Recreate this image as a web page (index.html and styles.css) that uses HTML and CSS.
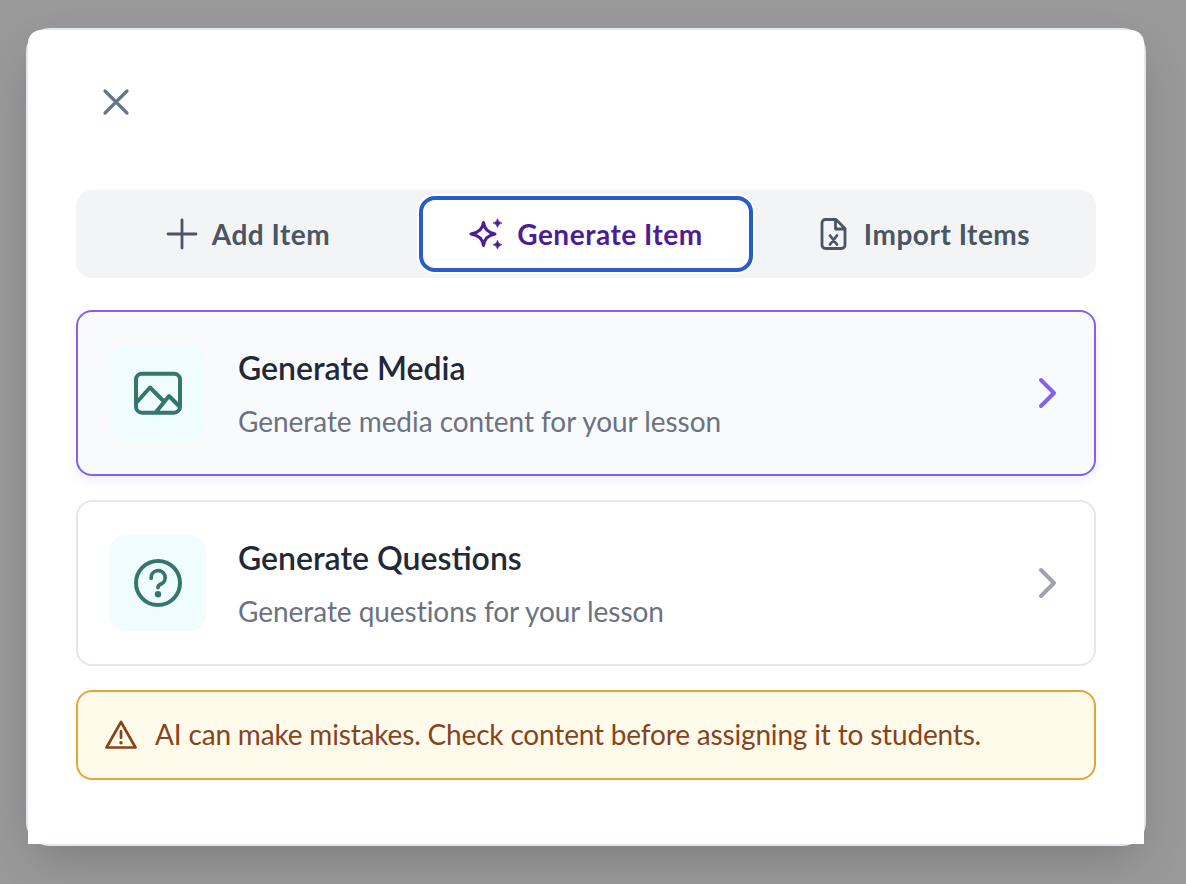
FILE: index.html
```
<!DOCTYPE html>
<html lang="en">
<head>
    <meta charset="UTF-8">
    <meta name="viewport" content="width=device-width, initial-scale=1.0">
    <title>Generate Item</title>
    <link rel="stylesheet" href="styles.css">
</head>
<body>
    <div class="modal">
        <div class="modal-content">
            <button class="close-btn" aria-label="Close">
                <svg width="28" height="28" viewBox="0 0 28 28"><path d="M3 3L25 25M25 3L3 25" stroke-width="3.2"/></svg>
            </button>

            <div class="tabs">
                <button class="tab">
                    <svg width="32" height="32" viewBox="0 0 32 32"><path d="M16 2V30M2 16H30" stroke-width="2.8"/></svg>
                    <span>Add Item</span>
                </button>
                <button class="tab active">
                    <svg width="34" height="32" viewBox="0 0 34 32">
                        <path d="M14.5 4.5Q16 14.5 26 16Q16 17.5 14.5 27.5Q13 17.5 2 16Q13 14.5 14.5 4.5Z" stroke-width="3"/>
                        <path class="fill" d="M28.5 1Q29.2 4.3 33 5Q29.2 5.7 28.5 9.5Q27.8 5.7 24 5Q27.8 4.3 28.5 1ZM28.5 22.5Q29.2 26 33 26.7Q29.2 27.4 28.5 31Q27.8 27.4 24 26.7Q27.8 26 28.5 22.5Z" stroke-width="0.6"/>
                    </svg>
                    <span>Generate Item</span>
                </button>
                <button class="tab">
                    <svg width="32" height="32" viewBox="0 0 32 32">
                        <path d="M18 1.5H7.5A3.5 3.5 0 0 0 4 5V27A3.5 3.5 0 0 0 7.5 30.5H23.5A3.5 3.5 0 0 0 27 27V10.5ZM17.5 2V11H27M12 17.5L19 26.5M19 17.5L12 26.5" stroke-width="2.8"/>
                    </svg>
                    <span>Import Items</span>
                </button>
            </div>

            <div class="option selected">
                <div class="option-icon">
                    <svg width="48" height="48" viewBox="0 0 48 48">
                        <rect x="2" y="4.7" width="44" height="39" rx="6" stroke-width="4"/>
                        <path d="M2.5 33.5L16 18.5L30 32.5M22.5 42.5L35 27L45.5 37.5" stroke-width="4"/>
                    </svg>
                </div>
                <div class="option-text">
                    <h3>Generate Media</h3>
                    <p>Generate media content for your lesson</p>
                </div>
                <svg class="chevron" width="20" height="32" viewBox="0 0 20 32"><path d="M3 3L16 16L3 29" stroke-width="4"/></svg>
            </div>

            <div class="option">
                <div class="option-icon">
                    <svg width="48" height="48" viewBox="0 0 48 48">
                        <circle cx="24" cy="24" r="22" stroke-width="4"/>
                        <path d="M17.2 19.3A7 7 0 1 1 27 25Q24 26.3 24 28.5" stroke-width="3.8"/>
                        <circle class="fill" cx="24" cy="35.3" r="3.2" stroke-width="0"/>
                    </svg>
                </div>
                <div class="option-text">
                    <h3>Generate Questions</h3>
                    <p>Generate questions for your lesson</p>
                </div>
                <svg class="chevron" width="20" height="32" viewBox="0 0 20 32"><path d="M3 3L16 16L3 29" stroke-width="4"/></svg>
            </div>

            <div class="alert">
                <svg width="32" height="32" viewBox="0 0 32 32">
                    <path d="M16 3L30.5 28.5H1.5ZM16 12.3V18.8" stroke-width="2.7"/>
                    <circle class="fill" cx="16" cy="23.7" r="1.7" stroke-width="0"/>
                </svg>
                <span>AI can make mistakes. Check content before assigning it to students.</span>
            </div>
        </div>
    </div>
</body>
</html>
```
FILE: styles.css
```
* {
    box-sizing: border-box;
}
body {
    margin: 0;
    height: 884px;
    padding: 28px 26px;
    background: #999;
    font-family: Lato, sans-serif;
    overflow: hidden;
}
svg {
    display: block;
    flex-shrink: 0;
    fill: none;
    stroke: currentColor;
    stroke-linecap: round;
    stroke-linejoin: round;
}
.fill {
    fill: currentColor;
}
button {
    border: none;
    background: none;
    font-family: inherit;
    cursor: pointer;
}
.modal {
    width: 1120px;
    height: 818px;
    border: 2px solid #e2e8f0;
    border-radius: 24px;
    box-shadow: 0 20px 50px -10px rgba(0, 0, 0, 0.2);
}
.modal-content {
    height: 100%;
    padding: 32px 48px;
    background: #fff;
    border-radius: 13px 13px 0 0;
}
.close-btn {
    display: flex;
    align-items: center;
    justify-content: center;
    width: 80px;
    height: 80px;
    padding: 0;
    color: #64748b;
}
.tabs {
    display: flex;
    gap: 4px;
    height: 88px;
    margin-top: 48px;
    padding: 6px 5px;
    background: #f3f4f6;
    border-radius: 16px;
}
.tab {
    flex: 1;
    display: flex;
    align-items: center;
    justify-content: center;
    gap: 14px;
    padding: 0;
    border: 4px solid transparent;
    border-radius: 16px;
    color: #4b5563;
    font-size: 28px;
    font-weight: 700;
    letter-spacing: 0.52px;
}
.tab.active {
    background: #fff;
    border-color: #265dc8;
    box-shadow: 0 0 0 2px #fff;
    color: #4c1d95;
}
.option {
    display: flex;
    align-items: center;
    height: 166px;
    margin-top: 24px;
    padding: 0 36px 0 32px;
    border: 2px solid #e5e7eb;
    border-radius: 16px;
}
.option.selected {
    margin-top: 32px;
    background: #f9fafc;
    border-color: #8460ee;
    box-shadow: 0 4px 12px rgba(132, 96, 238, 0.12);
}
.option-icon {
    display: flex;
    align-items: center;
    justify-content: center;
    width: 96px;
    height: 96px;
    border-radius: 16px;
    background: #f0fdff;
    color: #35766e;
}
.option-text {
    flex: 1;
    margin-left: 32px;
}
.option-text h3 {
    margin: 0 0 8px;
    color: #1f2937;
    font-size: 32px;
    line-height: 48px;
    font-weight: 600;
}
.option-text p {
    margin: 0;
    color: #6b7280;
    font-size: 28px;
    line-height: 42px;
    letter-spacing: -0.05px;
}
.chevron {
    color: #9ca3af;
}
.selected .chevron {
    color: #8460ee;
}
.alert {
    display: flex;
    align-items: center;
    gap: 18px;
    height: 90px;
    margin-top: 24px;
    padding: 0 27px 1px;
    background: #fffbeb;
    border: 2px solid #e9a23b;
    border-radius: 16px;
    color: #87431d;
    font-size: 28px;
    letter-spacing: -0.17px;
}
.alert span {
    margin-bottom: 2px;
}
```
